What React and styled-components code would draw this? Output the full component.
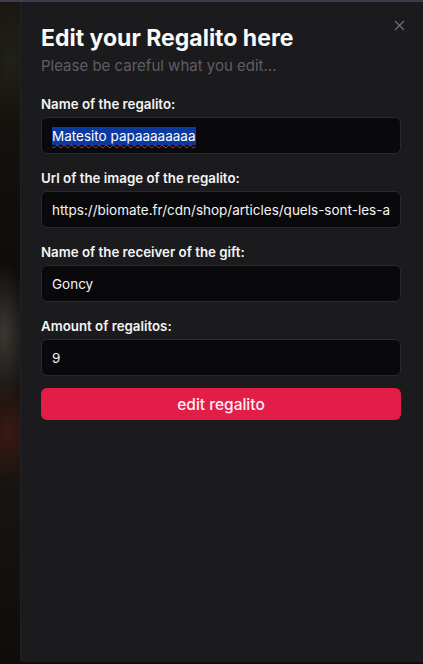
import React from 'react'
import styled, { createGlobalStyle } from 'styled-components'

const GlobalStyle = createGlobalStyle`
  html, body {
    margin: 0;
    padding: 0;
    background: #0c0a09;
    font-family: Inter, "Open Sans", sans-serif;
  }
`

const Screen = styled.div`
  width: 423px;
  height: 664px;
  display: flex;
  flex-direction: column;
  overflow: hidden;
  background: #110d0b;
`

const TopStrip = styled.div`
  height: 2px;
  background: #3b3e4c;
  flex-shrink: 0;
`

const Stage = styled.div`
  flex: 1;
  display: flex;
  min-width: 0;
  background:
    radial-gradient(ellipse 26px 70px at 4px 330px, rgba(95, 90, 84, 0.55), transparent),
    radial-gradient(ellipse 26px 50px at 8px 430px, rgba(85, 25, 15, 0.55), transparent),
    radial-gradient(ellipse 26px 60px at 10px 60px, rgba(40, 45, 30, 0.55), transparent),
    linear-gradient(#1b1712 0%, #120e0b 30%, #0f0b09 45%, #1a1613 65%, #100c0a 100%);
  padding-bottom: 2px;
`

const Drawer = styled.div`
  margin-left: 20px;
  flex: 1;
  min-width: 0;
  background: #1b1b1d;
  border-left: 1px solid #222226;
  border-bottom-left-radius: 4px;
  padding: 22px 22px 0 20px;
  position: relative;
  display: flex;
  flex-direction: column;
`

const Close = styled.button`
  position: absolute;
  top: 18px;
  right: 18px;
  background: none;
  border: none;
  padding: 0;
  color: #6e6e76;
  display: flex;
`

const Title = styled.h2`
  margin: 0;
  color: #fafafa;
  font-size: 23px;
  font-weight: 700;
  line-height: 28px;
`

const Subtitle = styled.p`
  margin: 4px 0 0;
  color: #5e5e66;
  font-size: 15px;
  line-height: 20px;
`

const Form = styled.div`
  margin-top: 19px;
  display: flex;
  flex-direction: column;
`

const Field = styled.div`
  display: flex;
  flex-direction: column;
  gap: 4px;
  margin-bottom: 15px;
`

const Label = styled.label`
  color: #f4f4f5;
  font-size: 13.3px;
  font-weight: 600;
  line-height: 18px;
`

const Input = styled.div`
  height: 37px;
  box-sizing: border-box;
  background: #09090b;
  border: 1px solid #2a2a2e;
  border-radius: 6px;
  padding: 0 10px;
  display: flex;
  align-items: center;
  color: #f4f4f5;
  font-size: 13.5px;
  white-space: nowrap;
  overflow: hidden;
`

const Selected = styled.span`
  background: #0a3a9f;
  color: #ffffff;
  text-decoration: underline wavy #c0392b;
  text-decoration-thickness: 1px;
  text-underline-offset: 3px;
  line-height: 18px;
`

const SubmitButton = styled.button`
  margin-top: -3px;
  height: 32px;
  border: none;
  border-radius: 6px;
  background: #e11d48;
  color: #fdf2f4;
  font-family: inherit;
  font-size: 15.5px;
  font-weight: 500;
`

const fields = [
  { label: 'Name of the regalito:', value: 'Matesito papaaaaaaaa', selected: true },
  { label: 'Url of the image of the regalito:', value: 'https://biomate.fr/cdn/shop/articles/quels-sont-les-a' },
  { label: 'Name of the receiver of the gift:', value: 'Goncy' },
  { label: 'Amount of regalitos:', value: '9' },
]

export default function App() {
  return (
    <Screen>
      <GlobalStyle />
      <TopStrip />
      <Stage>
        <Drawer>
          <Close aria-label="close">
            <svg width="11" height="11" viewBox="0 0 11 11" fill="none" stroke="currentColor" strokeWidth="1.3">
              <path d="M1 1l9 9M10 1l-9 9" />
            </svg>
          </Close>
          <Title>Edit your Regalito here</Title>
          <Subtitle>Please be careful what you edit...</Subtitle>
          <Form>
            {fields.map((f) => (
              <Field key={f.label}>
                <Label>{f.label}</Label>
                <Input>{f.selected ? <Selected>{f.value}</Selected> : f.value}</Input>
              </Field>
            ))}
            <SubmitButton>edit regalito</SubmitButton>
          </Form>
        </Drawer>
      </Stage>
    </Screen>
  )
}
